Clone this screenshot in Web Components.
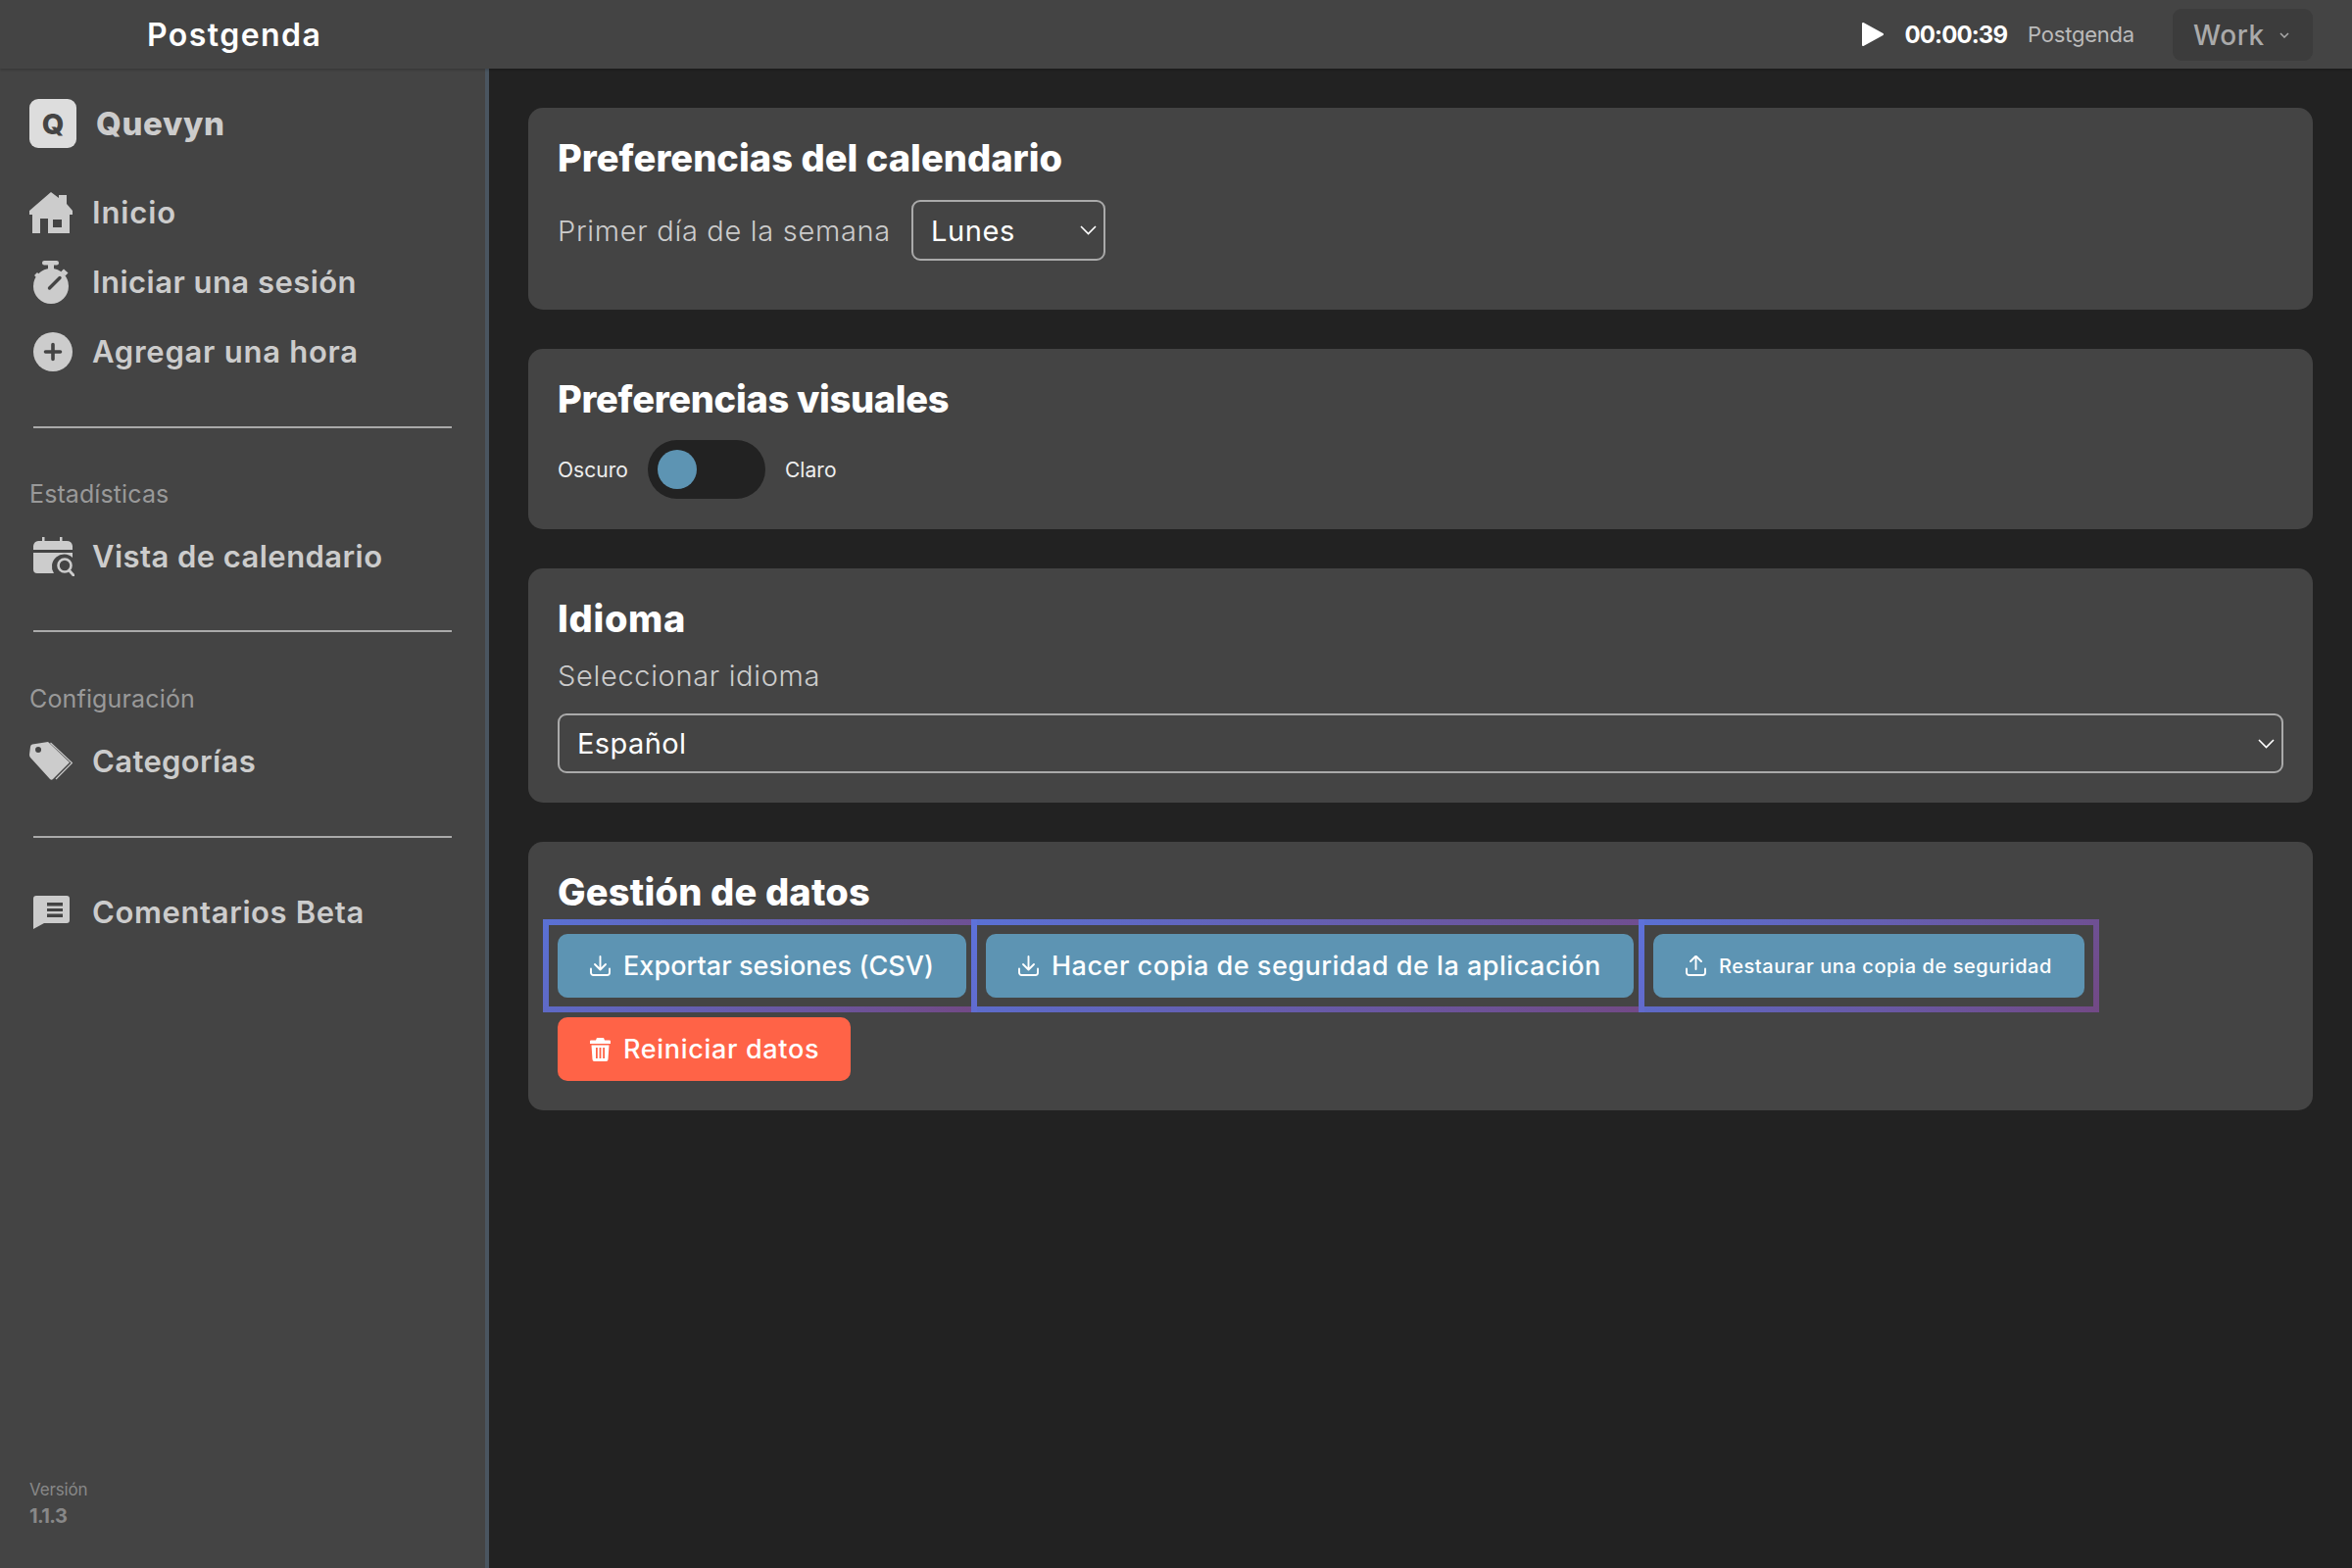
<!DOCTYPE html>
<html lang="es">
<head>
<meta charset="utf-8">
<title>Postgenda</title>
<style>
  html, body { margin: 0; height: 100%; background: #222; }
  body { font-family: Inter, "Open Sans", sans-serif; color: #fff; }
</style>
</head>
<body>
<app-shell>
  <app-topbar slot="top"></app-topbar>
  <app-sidebar slot="side">
    <brand-row></brand-row>
    <nav-item icon="home" ml="0" style="--ls:.028em">Inicio</nav-item>
    <nav-item icon="watch" ml="4" style="--ls:.015em">Iniciar una sesión</nav-item>
    <nav-item icon="plus" ml="4" style="--ls:.024em">Agregar una hora</nav-item>
    <side-rule style="margin-top:41px"></side-rule>
    <side-label style="--ls:.004em">Estadísticas</side-label>
    <nav-item icon="cal" ml="4" style="--ls:.014em;margin-top:10px">Vista de calendario</nav-item>
    <side-rule style="margin-top:40px"></side-rule>
    <side-label style="--ls:.006em;margin-top:50px">Configuración</side-label>
    <nav-item icon="tag" ml="0" style="--ls:.012em;margin-top:10px">Categorías</nav-item>
    <side-rule style="margin-top:41px"></side-rule>
    <nav-item icon="msg" ml="4" style="--ls:.02em;margin-top:40px">Comentarios Beta</nav-item>
    <side-version></side-version>
  </app-sidebar>
  <set-card title="Preferencias del calendario" style="height:206px;--ls:.001em">
    <cal-pref></cal-pref>
  </set-card>
  <set-card title="Preferencias visuales" style="height:184px;--ls:-.008em">
    <theme-pref></theme-pref>
  </set-card>
  <set-card title="Idioma" style="height:239px;--ls:.018em">
    <lang-pref></lang-pref>
  </set-card>
  <set-card title="Gestión de datos" style="height:274px;--ls:.005em">
    <data-actions></data-actions>
  </set-card>
</app-shell>

<script>
// iconos en línea, viewBox propio de cada uno
const ICONS = {
  home: '<svg viewBox="0 0 44 42" width="44" height="42"><path fill="currentColor" fill-rule="evenodd" d="M22 0 30 6V3H38V12L44 19V23H41V42H3V23H0V19ZM11 27V42H19V27ZM24 28V36H33V28Z"/></svg>',
  watch: '<svg viewBox="0 0 36 44" width="36" height="44"><rect x="9" y="0" width="17" height="4.500" rx="2.200" fill="currentColor"/><rect x="15" y="4" width="6" height="6" fill="currentColor"/><path fill="currentColor" d="M31 8.500 35.500 12.500 32.500 15.500 28 11.500ZM4 12 1 15 4 18 7 15Z"/><circle cx="18" cy="26" r="18" fill="currentColor"/><path d="M16.500 28 27 17.500" stroke="#444" stroke-width="3.400" stroke-linecap="round"/></svg>',
  plus: '<svg viewBox="0 0 40 40" width="40" height="40"><circle cx="20" cy="20" r="20" fill="currentColor"/><path d="M20 12.500V27.500M12.500 20H27.500" stroke="#444" stroke-width="3.600" stroke-linecap="round"/></svg>',
  cal: '<svg viewBox="0 0 42 40" width="42" height="40"><path fill="currentColor" d="M9 0h2.500V4H27V0h2.500V4H34a6 6 0 0 1 6 5V13H0V9A6 6 0 0 1 5 4H9Z"/><path fill="currentColor" d="M0 16H40V21A12.500 12.500 0 0 0 21 37H4A4 4 0 0 1 0 33Z"/><circle cx="32" cy="29" r="6.500" fill="none" stroke="currentColor" stroke-width="2.600"/><path d="M36.500 34 41 39" stroke="currentColor" stroke-width="2.800" stroke-linecap="round"/></svg>',
  tag: '<svg viewBox="0 0 44 40" width="44" height="40"><path fill="currentColor" fill-rule="evenodd" d="M3 2.500 19 0 41 21 24 38Q22.500 39.500 21 38L1 16Q0 15 0 13L1 5Q1 3 3 2.500ZM9 5A3 3 0 1 0 9.100 11 3 3 0 1 0 9 5Z"/><path d="M21.500 1 43.500 21.500 27 38" fill="none" stroke="currentColor" stroke-width="1.200"/></svg>',
  msg: '<svg viewBox="0 0 37 34" width="37" height="34"><path fill="currentColor" fill-rule="evenodd" d="M3 0H34a3 3 0 0 1 3 3V25a3 3 0 0 1-3 3H11L0 34V3A3 3 0 0 1 3 0ZM14 7V10.500H30V7ZM14 13V16H30V13ZM14 18.500V22H30V18.500Z"/></svg>',
  down: '<svg viewBox="0 0 21 21" width="21" height="21" fill="none" stroke="currentColor" stroke-width="1.900" stroke-linecap="round" stroke-linejoin="round"><path d="M10.500 1V14M5 9l5.500 5.500L16 9"/><path d="M1 13.500V17.500a2.500 2.500 0 0 0 2.500 2.500H17.500a2.500 2.500 0 0 0 2.500-2.500V13.500"/></svg>',
  up: '<svg viewBox="0 0 21 21" width="21" height="21" fill="none" stroke="currentColor" stroke-width="1.900" stroke-linecap="round" stroke-linejoin="round"><path d="M10.500 14V1M5 6l5.500-5.500L16 6"/><path d="M1 13.500V17.500a2.500 2.500 0 0 0 2.500 2.500H17.500a2.500 2.500 0 0 0 2.500-2.500V13.500"/></svg>',
  trash: '<svg viewBox="0 0 21 24" width="21" height="24"><path fill="#fff" d="M7 0H14L15 2.500H20a1 1 0 0 1 1 1V6H0V3.500a1 1 0 0 1 1-1H6Z"/><path fill="#fff" fill-rule="evenodd" d="M1.500 7.500H19.500L18.500 22a2 2 0 0 1-2 2H4.500a2 2 0 0 1-2-2ZM6 10V21H7.800V10ZM9.600 10V21H11.400V10ZM13.200 10V21H15V10Z"/></svg>'
};

function define(name, css, html) {
  customElements.define(name, class extends HTMLElement {
    connectedCallback() {
      if (this.shadowRoot) return;
      const root = this.attachShadow({ mode: 'open' });
      root.innerHTML = '<style>' + css + '</style>' + (typeof html === 'function' ? html(this) : html);
    }
  });
}

define('app-shell', `
  :host{display:grid;grid-template-columns:499px 1fr;grid-template-rows:70px 1fr;height:1600px;background:#222}
  ::slotted([slot=top]){grid-column:1 / 3}
  main{display:flex;flex-direction:column;gap:40px;padding:40px 40px 0}
`, '<slot name="top"></slot><slot name="side"></slot><main><slot></slot></main>');

define('app-topbar', `
  :host{display:flex;align-items:center;background:#444;height:70px;position:relative;z-index:2;box-shadow:0 1px 3px rgba(0,0,0,.25)}
  .name{margin-left:150px;font-size:32px;font-weight:600;letter-spacing:.045em;color:#fff}
  .right{margin-left:auto;display:flex;align-items:center;margin-right:40px}
  .play{width:22px;height:24px;margin-right:22px;display:block}
  .time{font-size:24px;font-weight:700;letter-spacing:-.038em;margin-right:21px}
  .proj{font-size:22px;color:#bbb;letter-spacing:-.01em;margin-right:39px}
  .cat{display:flex;align-items:center;width:143px;height:53px;box-sizing:border-box;padding:2px 0 0 21px;background:#3c3c3c;border-radius:9px;color:#aaa;font-size:28px;font-weight:500;letter-spacing:.02em}
  .cat svg{margin-left:15px}
`, `<div class="name">Postgenda</div>
  <div class="right">
    <svg class="play" viewBox="0 0 22 24"><path fill="#fff" stroke="#fff" stroke-width="2" stroke-linejoin="round" d="M1 1 21 12 1 23Z"/></svg>
    <span class="time">00:00:39</span><span class="proj">Postgenda</span>
    <div class="cat"><span>Work</span><svg width="10" height="6" viewBox="0 0 10 6" fill="none" stroke="#aaa" stroke-width="1.500"><path d="M1 1l4 4 4-4"/></svg></div>
  </div>`);

define('app-sidebar', `
  :host{display:flex;flex-direction:column;background:#444;border-right:4px solid #4a5560;box-sizing:border-box;padding:0 0 38px 30px;height:1530px}
`, '<slot></slot>');

define('brand-row', `
  :host{display:flex;align-items:center;margin-top:31px;margin-bottom:30px;height:50px}
  .q{width:48px;height:50px;border-radius:9px;background:#ddd;color:#444;display:flex;align-items:center;justify-content:center;font-size:29px;font-weight:800}
  .t{margin-left:20px;font-size:33px;font-weight:800;letter-spacing:.02em;color:#ccc}
`, '<div class="q">Q</div><div class="t">Quevyn</div>');

define('nav-item', `
  :host{display:flex;align-items:center;height:71px;color:#ccc}
  .i{width:64px;box-sizing:border-box;display:flex;flex:none}
  .t{font-size:31px;font-weight:600;letter-spacing:var(--ls,.04em);white-space:nowrap}
`, el => '<div class="i" style="padding-left:' + el.getAttribute('ml') + 'px">' + ICONS[el.getAttribute('icon')] + '</div><div class="t"><slot></slot></div>');

define('side-rule', `:host{display:block;height:2px;width:427px;margin-left:4px;background:#aaa}`, '');

define('side-label', `
  :host{display:block;margin-top:49px;height:36px;line-height:36px;font-size:25px;font-weight:400;letter-spacing:var(--ls,0);color:#999}
`, '<slot></slot>');

define('side-version', `
  :host{display:block;margin-top:auto;color:#888}
  .v{font-size:17px;letter-spacing:-.009em;line-height:24px}
  .n{font-size:20px;font-weight:700;letter-spacing:-.03em;line-height:30px}
`, '<div class="v">Versión</div><div class="n">1.1.3</div>');

define('set-card', `
  :host{display:block;background:#444;border-radius:15px;box-sizing:border-box;padding:28px 30px 0}
  h2{margin:0;font-size:38px;font-weight:800;letter-spacing:var(--ls,0);line-height:46px;color:#fff}
`, el => '<h2>' + el.getAttribute('title') + '</h2><slot></slot>');

const CHEV = w => '<svg width="' + w + '" height="' + Math.round(w * .58) + '" viewBox="0 0 17 10" fill="none" stroke="#fff" stroke-width="1.600"><path d="M1 1l7.500 7.500L16 1"/></svg>';

define('cal-pref', `
  :host{display:flex;align-items:center;margin-top:20px}
  .l{font-size:29px;font-weight:300;color:#ccc;letter-spacing:.024em}
  .s{margin-left:21px;width:198px;height:62px;box-sizing:border-box;border:2px solid #aaa;border-radius:9px;display:flex;align-items:center;justify-content:space-between;padding:0 7px 0 18px;font-size:29px;font-weight:400;letter-spacing:.02em}
`, '<span class="l">Primer día de la semana</span><div class="s"><span>Lunes</span>' + CHEV(17) + '</div>');

define('theme-pref', `
  :host{display:flex;align-items:center;margin-top:19px;font-size:21px;letter-spacing:.002em;color:#eee}
  .t{width:120px;height:60px;border-radius:30px;background:#222;margin:0 20px 0 20px;display:flex;align-items:center;padding-left:10px;box-sizing:border-box}
  .k{width:40px;height:40px;border-radius:50%;background:#5d94b3}
`, '<span>Oscuro</span><div class="t"><div class="k"></div></div><span>Claro</span>');

define('lang-pref', `
  :host{display:block;margin-top:16px}
  .l{font-size:29px;font-weight:300;color:#ccc;letter-spacing:.023em;line-height:40px}
  .s{margin-top:18px;height:61px;box-sizing:border-box;border:2px solid #aaa;border-radius:9px;display:flex;align-items:center;justify-content:space-between;padding:0 7px 0 18px;font-size:29px;letter-spacing:.014em}
`, '<div class="l">Seleccionar idioma</div><div class="s"><span>Español</span>' + CHEV(17) + '</div>');

define('data-btn', `
  :host{display:inline-flex;align-items:center;height:65px;box-sizing:border-box;padding:0 var(--pr,33px) 0 33px;border-radius:10px;background:var(--bg,#5d94b3);color:#fff;font-size:var(--fs,27px);font-weight:500;letter-spacing:var(--ls,.03em);white-space:nowrap}
  svg{flex:none;margin-right:13px}
`, el => ICONS[el.getAttribute('icon')] + '<slot></slot>');

define('data-actions', `
  :host{display:flex;flex-wrap:wrap;align-items:flex-start;margin:5px 0 0 -15px}
  .o{display:flex;box-sizing:border-box;height:95px;padding:9px 5px 9px 9px;border:6px solid transparent;border-image:linear-gradient(135deg,rgba(92,116,224,.92),rgba(118,74,140,.92)) 1}
  .o + .o{margin-left:-6px}
  .o.last{padding-right:9px}
  .r{flex-basis:100%;margin:5px 0 0 15px}
`, `<div class="o"><data-btn icon="down" style="--ls:.002em">Exportar sesiones (CSV)</data-btn></div>
  <div class="o"><data-btn icon="down" style="--ls:.019em">Hacer copia de seguridad de la aplicación</data-btn></div>
  <div class="o last"><data-btn icon="up" style="--fs:20px;--ls:.029em">Restaurar una copia de seguridad</data-btn></div>
  <div class="r"><data-btn icon="trash" style="--bg:#ff6347;--ls:.025em;--pr:32px">Reiniciar datos</data-btn></div>`);
</script>
</body>
</html>
